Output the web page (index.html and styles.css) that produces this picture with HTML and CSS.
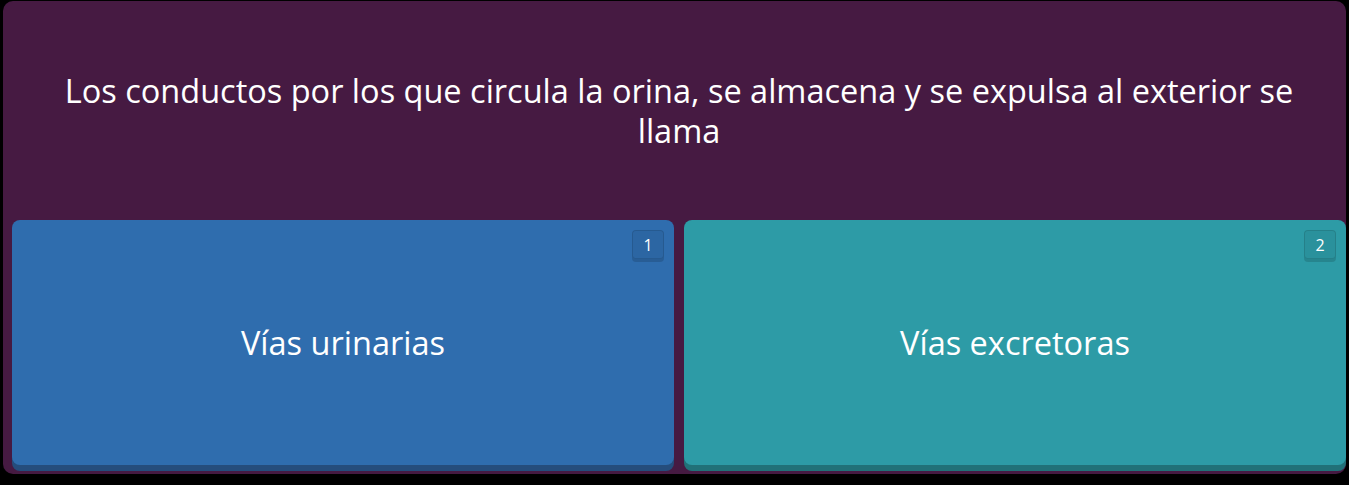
FILE: index.html
```html
<!DOCTYPE html>
<html lang="es">
<head>
<meta charset="utf-8">
<link rel="stylesheet" href="styles.css">
</head>
<body>
<div class="quiz">
  <div class="question">
    <p class="question-text">Los conductos por los que circula la orina, se almacena y se expulsa al exterior se llama</p>
  </div>
  <div class="options">
    <div class="option option-blue">
      <span class="key">1</span>
      <span class="option-text">Vías urinarias</span>
    </div>
    <div class="option option-teal">
      <span class="key">2</span>
      <span class="option-text">Vías excretoras</span>
    </div>
  </div>
</div>
</body>
</html>
```
FILE: styles.css
```css
html, body {
  margin: 0;
  padding: 0;
  background: #000;
  height: 100%;
}
body {
  font-family: "Open Sans", "Lato", sans-serif;
  overflow: hidden;
}
.quiz {
  margin: 1px 0 0 3px;
  width: 1343px;
  height: 473px;
  box-sizing: border-box;
  background: #461a42;
  border-radius: 10px;
  padding: 0 0 3px 9px;
  display: flex;
  flex-direction: column;
}
.question {
  height: 219px;
  display: flex;
  align-items: center;
  justify-content: center;
  padding: 1px 20px 0;
  box-sizing: border-box;
}
.question-text {
  margin: 0;
  max-width: 1275px;
  color: #fff;
  font-size: 32.5px;
  line-height: 40px;
  font-weight: 500;
  text-align: center;
}
.options {
  flex: 1;
  display: flex;
  gap: 10px;
}
.option {
  flex: 1;
  position: relative;
  border-radius: 8px;
  display: flex;
  align-items: center;
  justify-content: center;
  margin-bottom: 6px;
}
.option-blue {
  background: #2f6dae;
  box-shadow: 0 6px 0 #254d7c;
}
.option-teal {
  background: #2d9ba6;
  box-shadow: 0 6px 0 #217178;
}
.option-text {
  color: #fff;
  font-size: 32.5px;
  font-weight: 500;
}
.key {
  position: absolute;
  top: 10px;
  right: 10px;
  width: 32px;
  height: 29px;
  box-sizing: border-box;
  border-radius: 4px;
  border: 1px solid rgba(0, 0, 0, 0.12);
  background: rgba(0, 0, 0, 0.06);
  box-shadow: 0 3px 0 rgba(0, 0, 0, 0.14);
  color: #fff;
  font-family: "Open Sans", sans-serif;
  font-size: 16px;
  line-height: 1;
  display: flex;
  align-items: center;
  justify-content: center;
}
```
